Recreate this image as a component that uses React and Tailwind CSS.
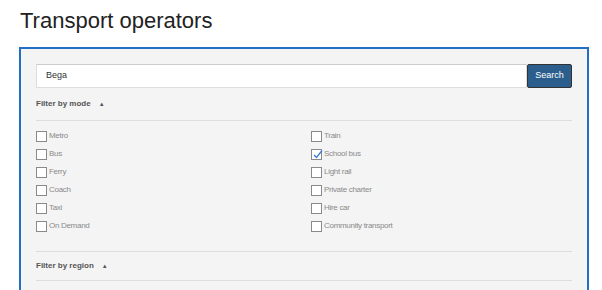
const leftModes = ['Metro', 'Bus', 'Ferry', 'Coach', 'Taxi', 'On Demand']
const rightModes = ['Train', 'School bus', 'Light rail', 'Private charter', 'Hire car', 'Community transport']
const checked = ['School bus']

function Check({ label }) {
  const on = checked.includes(label)
  return (
    <div className="flex items-center h-[18px]">
      <span className="relative w-[11px] h-[11px] border border-[#8a8a8a] bg-white shrink-0">
        {on && (
          <svg className="absolute left-[0px] top-[-1px]" width="11" height="11" viewBox="0 0 11 11">
            <path d="M2 6 L4.5 8.5 L10 1.5" fill="none" stroke="#3a7bd5" strokeWidth="1.3" />
          </svg>
        )}
      </span>
      <span className="ml-[2px] text-[8px] tracking-[-0.3px] text-[#8a8a8a]">{label}</span>
    </div>
  )
}

export default function App() {
  return (
    <div className="w-[602px] h-[290px] overflow-hidden bg-white font-['Liberation_Sans',Arial,sans-serif]">
      <h1 className="pl-[20px] pt-[7px] text-[22px] leading-[28px] text-[#222]">Transport operators</h1>
      <div className="ml-[19px] mt-[12px] w-[570px] h-[300px] border-2 border-[#2170c4] bg-[#f4f4f4] px-[15px] pt-[15px]">
        <div className="flex items-center w-[536px]">
          <div className="flex-1 h-[24px] bg-white border border-[#ddd] border-t-[#ccc] flex items-center pl-[9px] text-[9px] text-[#333]">
            Bega
          </div>
          <button className="w-[45px] h-[24px] bg-[#2b5e8c] border border-[#333] rounded-[2px] text-white text-[9px]">
            Search
          </button>
        </div>
        <div className="flex items-center h-[32px] text-[8px] font-bold text-[#555]">
          Filter by mode
          <span className="ml-[8px] text-[6px] text-[#555]">▲</span>
        </div>
        <div className="w-[536px] border-t border-[#ddd]" />
        <div className="grid grid-cols-2 pt-[6px] w-[536px]">
          <div className="flex flex-col">
            {leftModes.map(m => <Check key={m} label={m} />)}
          </div>
          <div className="flex flex-col pl-[7px]">
            {rightModes.map(m => <Check key={m} label={m} />)}
          </div>
        </div>
        <div className="w-[536px] border-t border-[#ddd] mt-[16px]" />
        <div className="flex items-center h-[28px] text-[8px] font-bold text-[#555]">
          Filter by region
          <span className="ml-[8px] text-[6px] text-[#555]">▲</span>
        </div>
        <div className="w-[536px] border-t border-[#ddd]" />
      </div>
    </div>
  )
}
